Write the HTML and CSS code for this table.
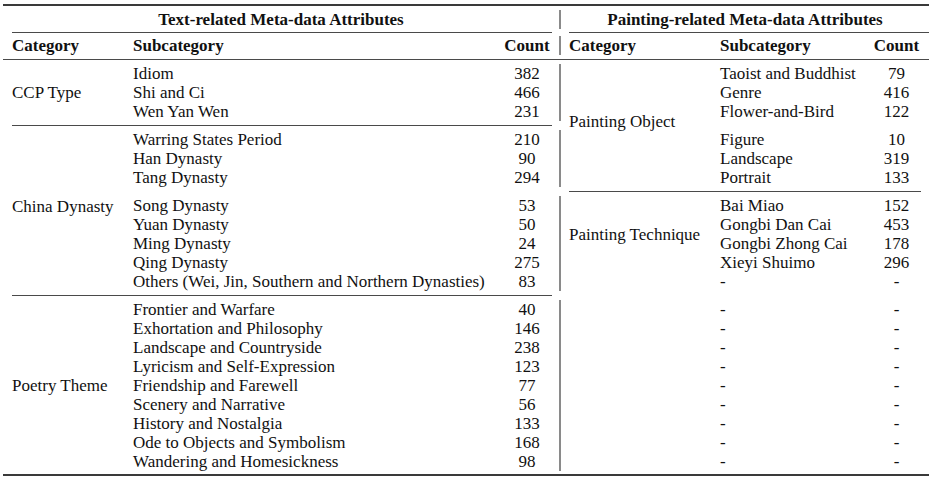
FILE: index.html
```html
<!DOCTYPE html>
<html lang="en">

<head>
    <meta charset="UTF-8">
    <meta name="viewport" content="width=device-width, initial-scale=1.0">
    <title>Meta-data Attributes</title>
    <link rel="stylesheet" href="styles.css">
</head>

<body>
    <div class="page">
        <table class="meta">
            <colgroup>
                <col class="c-cat">
                <col class="c-sub">
                <col class="c-count">
                <col class="c-sep">
                <col class="c-cat2">
                <col class="c-sub2">
                <col class="c-count2">
            </colgroup>
            <tr class="gap-top"><td colspan="7"></td></tr>
            <tr class="title">
                <th colspan="3">Text-related Meta-data Attributes</th>
                <td class="bar"></td>
                <th colspan="3">Painting-related Meta-data Attributes</th>
            </tr>
            <tr class="rule rule-cm">
                <td colspan="3"><div class="line line-l"></div></td>
                <td></td>
                <td colspan="3"><div class="line line-r-open"></div></td>
            </tr>
            <tr class="head">
                <th class="cat">Category</th>
                <th class="sub">Subcategory</th>
                <th class="num">Count</th>
                <td class="bar"></td>
                <th class="cat2">Category</th>
                <th class="sub2">Subcategory</th>
                <th class="num">Count</th>
            </tr>
            <tr class="rule">
                <td colspan="7"><div class="line"></div></td>
            </tr>

            <!-- rows 1-3 -->
            <tr>
                <td class="cat" rowspan="3">CCP Type</td>
                <td class="sub">Idiom</td><td class="num">382</td>
                <td class="bar"></td>
                <td class="cat2 object" rowspan="7">Painting Object</td>
                <td class="sub2">Taoist and Buddhist</td><td class="num">79</td>
            </tr>
            <tr>
                <td class="sub">Shi and Ci</td><td class="num">466</td>
                <td class="bar"></td>
                <td class="sub2">Genre</td><td class="num">416</td>
            </tr>
            <tr>
                <td class="sub">Wen Yan Wen</td><td class="num">231</td>
                <td class="bar"></td>
                <td class="sub2">Flower-and-Bird</td><td class="num">122</td>
            </tr>
            <tr class="rule">
                <td colspan="3"><div class="line line-l"></div></td>
                <td></td>
                <td></td><td></td>
            </tr>

            <!-- rows 4-6 -->
            <tr>
                <td class="cat dynasty" rowspan="9">China Dynasty</td>
                <td class="sub">Warring States Period</td><td class="num">210</td>
                <td class="bar"></td>
                <td class="sub2">Figure</td><td class="num">10</td>
            </tr>
            <tr>
                <td class="sub">Han Dynasty</td><td class="num">90</td>
                <td class="bar"></td>
                <td class="sub2">Landscape</td><td class="num">319</td>
            </tr>
            <tr>
                <td class="sub">Tang Dynasty</td><td class="num">294</td>
                <td class="bar"></td>
                <td class="sub2">Portrait</td><td class="num">133</td>
            </tr>
            <tr class="rule">
                <td></td><td></td>
                <td></td>
                <td colspan="3"><div class="line line-r"></div></td>
            </tr>

            <!-- rows 7-11 -->
            <tr>
                <td class="sub">Song Dynasty</td><td class="num">53</td>
                <td class="bar"></td>
                <td class="cat2" rowspan="4">Painting Technique</td>
                <td class="sub2">Bai Miao</td><td class="num">152</td>
            </tr>
            <tr>
                <td class="sub">Yuan Dynasty</td><td class="num">50</td>
                <td class="bar"></td>
                <td class="sub2">Gongbi Dan Cai</td><td class="num">453</td>
            </tr>
            <tr>
                <td class="sub">Ming Dynasty</td><td class="num">24</td>
                <td class="bar"></td>
                <td class="sub2">Gongbi Zhong Cai</td><td class="num">178</td>
            </tr>
            <tr>
                <td class="sub">Qing Dynasty</td><td class="num">275</td>
                <td class="bar"></td>
                <td class="sub2">Xieyi Shuimo</td><td class="num">296</td>
            </tr>
            <tr>
                <td class="sub">Others (Wei, Jin, Southern and Northern Dynasties)</td><td class="num">83</td>
                <td class="bar"></td>
                <td class="cat2"></td><td class="sub2">-</td><td class="num">-</td>
            </tr>
            <tr class="rule">
                <td colspan="3"><div class="line line-l"></div></td>
                <td></td>
                <td></td><td></td><td></td>
            </tr>

            <!-- rows 12-20 -->
            <tr>
                <td class="cat" rowspan="9">Poetry Theme</td>
                <td class="sub">Frontier and Warfare</td><td class="num">40</td>
                <td class="bar"></td>
                <td class="cat2"></td><td class="sub2">-</td><td class="num">-</td>
            </tr>
            <tr>
                <td class="sub">Exhortation and Philosophy</td><td class="num">146</td>
                <td class="bar"></td>
                <td class="cat2"></td><td class="sub2">-</td><td class="num">-</td>
            </tr>
            <tr>
                <td class="sub">Landscape and Countryside</td><td class="num">238</td>
                <td class="bar"></td>
                <td class="cat2"></td><td class="sub2">-</td><td class="num">-</td>
            </tr>
            <tr>
                <td class="sub">Lyricism and Self-Expression</td><td class="num">123</td>
                <td class="bar"></td>
                <td class="cat2"></td><td class="sub2">-</td><td class="num">-</td>
            </tr>
            <tr>
                <td class="sub">Friendship and Farewell</td><td class="num">77</td>
                <td class="bar"></td>
                <td class="cat2"></td><td class="sub2">-</td><td class="num">-</td>
            </tr>
            <tr>
                <td class="sub">Scenery and Narrative</td><td class="num">56</td>
                <td class="bar"></td>
                <td class="cat2"></td><td class="sub2">-</td><td class="num">-</td>
            </tr>
            <tr>
                <td class="sub">History and Nostalgia</td><td class="num">133</td>
                <td class="bar"></td>
                <td class="cat2"></td><td class="sub2">-</td><td class="num">-</td>
            </tr>
            <tr>
                <td class="sub">Ode to Objects and Symbolism</td><td class="num">168</td>
                <td class="bar"></td>
                <td class="cat2"></td><td class="sub2">-</td><td class="num">-</td>
            </tr>
            <tr>
                <td class="sub">Wandering and Homesickness</td><td class="num">98</td>
                <td class="bar"></td>
                <td class="cat2"></td><td class="sub2">-</td><td class="num">-</td>
            </tr>
            <tr class="gap-bottom"><td colspan="7"></td></tr>
        </table>
    </div>
</body>

</html>
```

FILE: styles.css
```css
* {
    box-sizing: border-box;
}

body {
    margin: 0;
    background: #fff;
    color: #111;
    font-family: "Liberation Serif", "Times New Roman", serif;
    font-size: 17px;
}

.page {
    padding: 4px 0 0 3px;
}

.meta {
    width: 926px;
    table-layout: fixed;
    border-collapse: separate;
    border-spacing: 0;
    border-top: 2px solid #3a3a3a;
    border-bottom: 2px solid #3a3a3a;
}

.c-cat { width: 121px; }
.c-sub { width: 371px; }
.c-count { width: 64px; }
.c-sep { width: 2px; }
.c-cat2 { width: 150px; }
.c-sub2 { width: 153px; }
.c-count2 { width: 65px; }

.meta td,
.meta th {
    padding: 0;
    height: 19px;
    line-height: 19px;
    white-space: nowrap;
    text-align: left;
    vertical-align: middle;
}

.meta th {
    font-weight: bold;
}

.meta .title th {
    text-align: center;
}

.meta .cat,
.meta .sub,
.meta .sub2 {
    padding-left: 9px;
}

.meta .cat2 {
    padding-left: 8px;
}

.meta .num {
    text-align: center;
}

.meta .bar {
    background: #8a8a8a;
}

/* multirow labels sit a bit higher than the middle of their span */
.meta .object {
    padding-bottom: 9px;
}

.meta .dynasty {
    padding-bottom: 8px;
}

/* booktabs style rules */
.meta .gap-top td {
    height: 4px;
    line-height: 0;
}

.meta .gap-bottom td {
    height: 3px;
    line-height: 0;
}

.meta .rule td {
    height: 9px;
    line-height: 0;
    vertical-align: top;
}

.meta .rule-cm td {
    height: 7px;
}

.line {
    margin-top: 4px;
    border-top: 1px solid #4a4a4a;
}

.rule-cm .line {
    margin-top: 3px;
}

.line-l {
    margin-left: 9px;
    margin-right: 7px;
}

.line-r {
    margin-left: 8px;
    margin-right: 8px;
}

.line-r-open {
    margin-left: 8px;
}
```
